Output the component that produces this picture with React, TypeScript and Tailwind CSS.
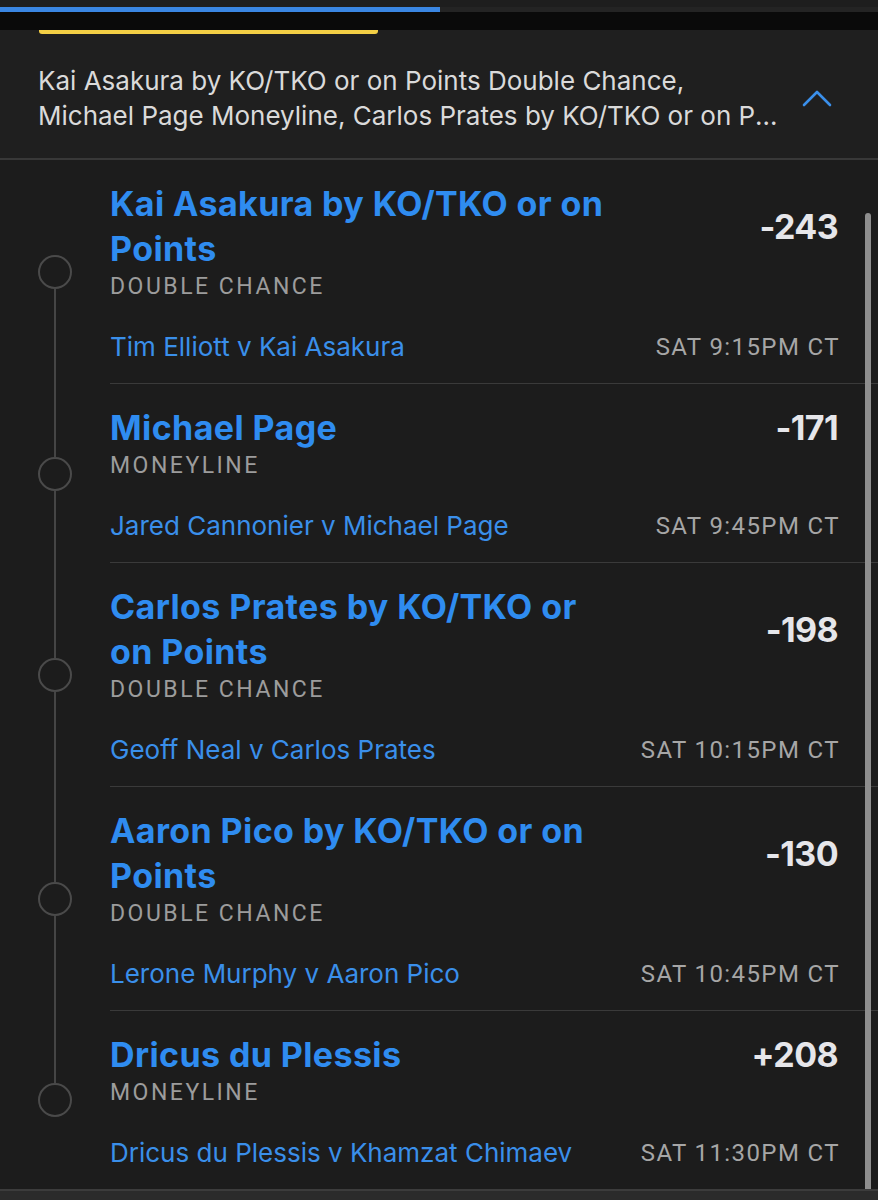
import React from "react";

type Bet = {
  title: string;
  type: string;
  match: string;
  odds: string;
  time: string;
};

const bets: Bet[] = [
  { title: "Kai Asakura by KO/TKO or on Points", type: "DOUBLE CHANCE", match: "Tim Elliott v Kai Asakura", odds: "-243", time: "SAT 9:15PM CT" },
  { title: "Michael Page", type: "MONEYLINE", match: "Jared Cannonier v Michael Page", odds: "-171", time: "SAT 9:45PM CT" },
  { title: "Carlos Prates by KO/TKO or on Points", type: "DOUBLE CHANCE", match: "Geoff Neal v Carlos Prates", odds: "-198", time: "SAT 10:15PM CT" },
  { title: "Aaron Pico by KO/TKO or on Points", type: "DOUBLE CHANCE", match: "Lerone Murphy v Aaron Pico", odds: "-130", time: "SAT 10:45PM CT" },
  { title: "Dricus du Plessis", type: "MONEYLINE", match: "Dricus du Plessis v Khamzat Chimaev", odds: "+208", time: "SAT 11:30PM CT" },
];

const sans = "font-['Inter','Lato',sans-serif]";
const cond = "font-['Roboto','Liberation_Sans',sans-serif]";

function Row({ bet, first, last }: { bet: Bet; first: boolean; last: boolean }) {
  return (
    <div className="flex">
      <div className="flex w-[110px] shrink-0 flex-col items-center">
        <div className={"w-[2px] flex-1 " + (first ? "bg-transparent" : "bg-[#454545]")} />
        <div className="h-[34px] w-[34px] rounded-full border-2 border-[#4a4a4a]" />
        <div className={"w-[2px] flex-1 " + (last ? "bg-transparent" : "bg-[#454545]")} />
      </div>
      <div
        className={
          "flex-1 pt-[21px] pr-[40px] pb-[21px] " + (last ? "" : "border-b border-[#3a3a3a]")
        }
      >
        <div className="flex items-center justify-between">
          <div className={sans + " w-[505px] text-[34px] font-bold leading-[45px] tracking-[0.4px] text-[#2f8cf0]"}>
            {bet.title}
          </div>
          <div className={sans + " text-[34px] font-bold leading-[45px] tracking-[-0.6px] text-[#e6e6ea]"}>{bet.odds}</div>
        </div>
        <div className={cond + " mt-[2px] text-[23px] leading-[28px] tracking-[2.5px] text-[#9c9c9c]"}>{bet.type}</div>
        <div className="mt-[31px] flex items-center justify-between leading-[30px]">
          <span className={sans + " text-[26px] text-[#3a8fea]"}>{bet.match}</span>
          <span className={cond + " mr-[-2px] text-[24px] tracking-[1.4px] text-[#a6a6a6]"}>{bet.time}</span>
        </div>
      </div>
    </div>
  );
}

export default function App() {
  return (
    <div className="h-[1200px] w-[878px] overflow-hidden bg-[#1c1c1c]">
      <div className="h-[7px] bg-[#1e1e1e]" />
      <div className="flex h-[5px]">
        <div className="w-[440px] bg-[#3a86e2]" />
        <div className="flex-1 bg-[#242424]" />
      </div>
      <div className="h-[18px] bg-[#0a0a0a]" />
      <div className="bg-[#1f1f1f]">
        <div className="h-[4px] pl-[39px]">
          <div className="h-[4px] w-[339px] rounded-b-[3px] bg-[#f3cf45]" />
        </div>
        <div className="flex items-center border-b-2 border-[#383838] pt-[29px] pb-[25px] pl-[38px]">
          <div className={sans + " w-[752px] text-[26px] leading-[35px] text-[#dadada]"}>
            <div className="whitespace-nowrap">Kai Asakura by KO/TKO or on Points Double Chance,</div>
            <div className="truncate">
              Michael Page Moneyline, Carlos Prates by KO/TKO or on Points Double Chance, Aaron Pico by KO/TKO or on Points Double Chance, Dricus du Plessis Moneyline
            </div>
          </div>
          <div className="ml-[12px] flex h-[20px] w-[30px] items-center justify-center">
            <svg width="30" height="18" viewBox="0 0 30 18" fill="none">
              <polyline points="2,16 15,3 28,16" stroke="#3a8fea" strokeWidth="2.6" strokeLinecap="round" strokeLinejoin="round" />
            </svg>
          </div>
        </div>
      </div>
      <div className="relative">
        {bets.map((b, i) => (
          <Row key={i} bet={b} first={i === 0} last={i === bets.length - 1} />
        ))}
        <div className="absolute top-[53px] right-[7px] bottom-0 w-[6px] rounded-t-full bg-[#8e8e8e]" />
      </div>
      <div className="h-[12px] border-t-2 border-[#3c3c3c] bg-[#2b2b2b]" />
    </div>
  );
}
